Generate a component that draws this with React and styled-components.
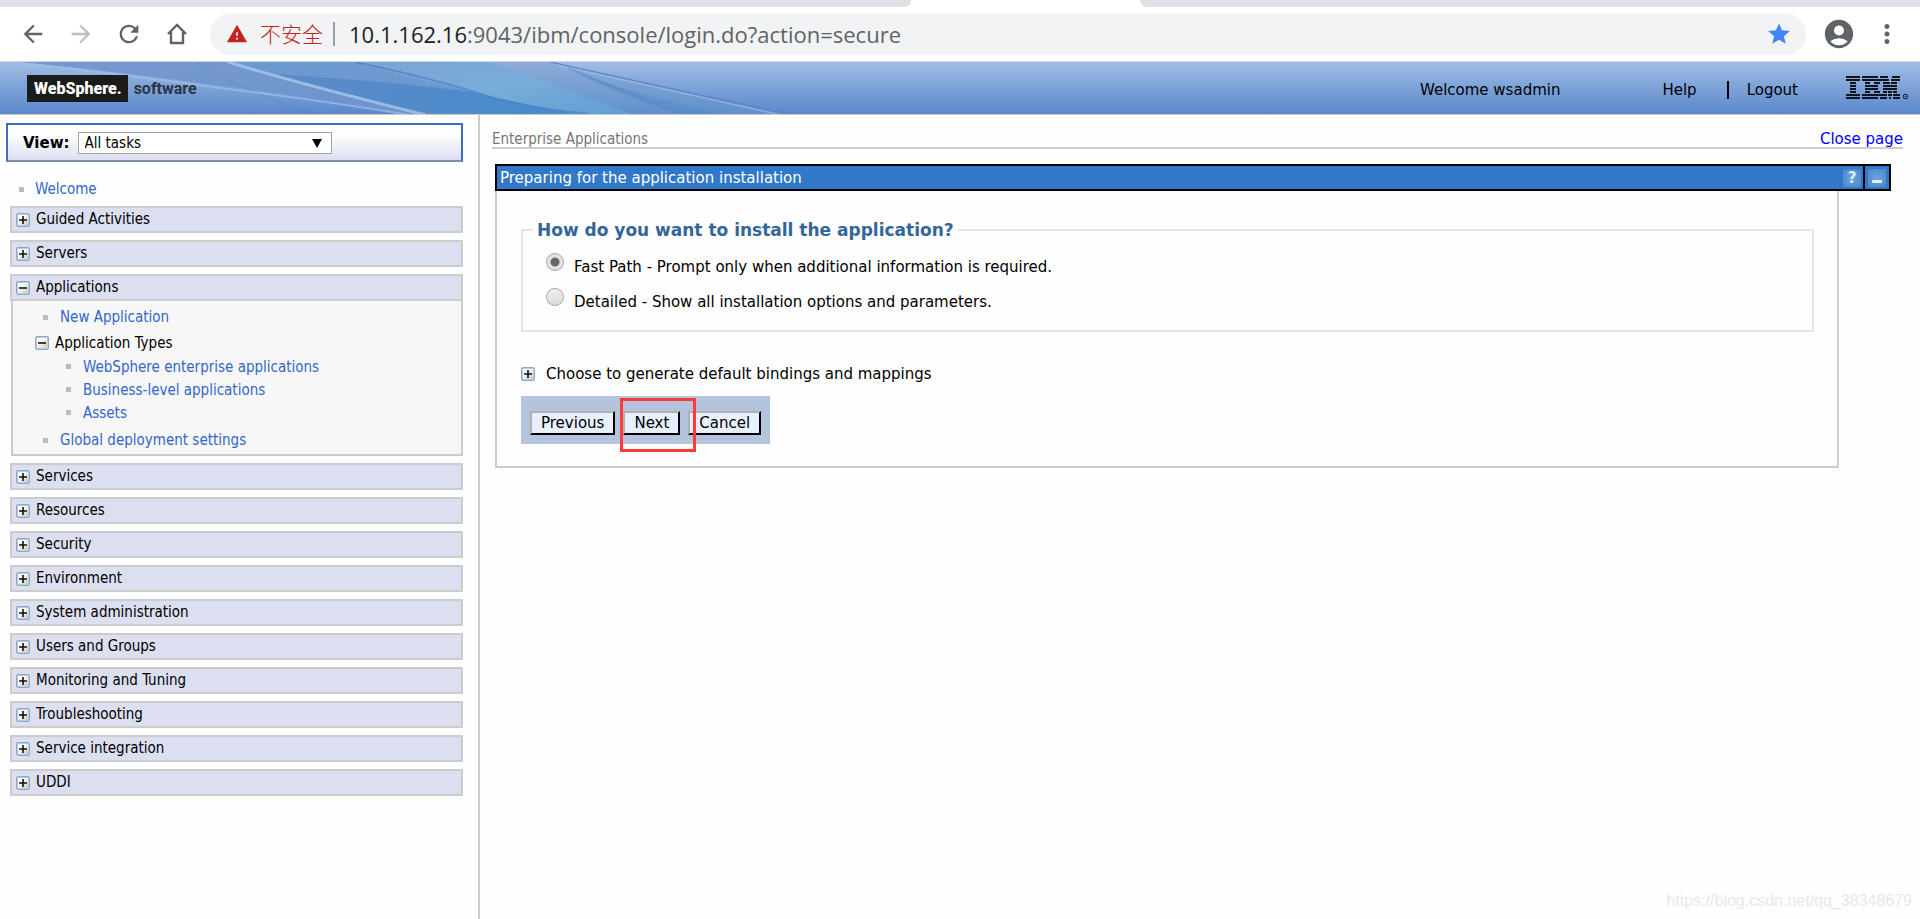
import React, { useState } from "react";
import styled, { createGlobalStyle } from "styled-components";
import {
  MdAccountCircle,
  MdArrowBack,
  MdArrowForward,
  MdMoreVert,
  MdRefresh,
  MdStar,
  MdWarning,
} from "react-icons/md";

const applicationLinks = [
  "WebSphere enterprise applications",
  "Business-level applications",
  "Assets",
];

const sectionsBefore = ["Guided Activities", "Servers"];

const sectionsAfter = [
  "Services",
  "Resources",
  "Security",
  "Environment",
  "System administration",
  "Users and Groups",
  "Monitoring and Tuning",
  "Troubleshooting",
  "Service integration",
  "UDDI",
];

function ToggleIcon({ open }) {
  return (
    <ToggleSvg viewBox="0 0 14 14" aria-hidden="true">
      <defs>
        <linearGradient id="toggleFill" x1="0" y1="0" x2="1" y2="1">
          <stop offset="0.3" stopColor="#ffffff" />
          <stop offset="1" stopColor="#cdc8b8" />
        </linearGradient>
      </defs>
      <rect x="0.5" y="0.5" width="13" height="13" rx="1.5" fill="#b9cde0" stroke="#8fa9c4" />
      <rect x="2" y="2" width="10" height="10" fill="url(#toggleFill)" />
      <path d={open ? "M3 7h8" : "M3 7h8M7 3v8"} stroke="#111" strokeWidth="1.6" />
    </ToggleSvg>
  );
}

function HomeIcon() {
  return (
    <svg width="28" height="28" viewBox="0 0 28 28" aria-hidden="true">
      <path
        d="M5 14L14 5l9 9M8 12v11h12V12"
        fill="none"
        stroke="#5f6368"
        strokeWidth="2.4"
      />
    </svg>
  );
}

function BannerArt() {
  return (
    <ArtSvg width="800" height="52" viewBox="0 0 800 52" aria-hidden="true">
      <defs>
        <linearGradient id="rightFade" x1="0" x2="0" y1="0" y2="1">
          <stop offset="0" stopColor="#8fadd9" />
          <stop offset="1" stopColor="#5f90cc" />
        </linearGradient>
        <linearGradient id="lightFade" x1="0" x2="1" y1="0" y2="1">
          <stop offset="0" stopColor="#7ba3d3" />
          <stop offset="0.5" stopColor="#79add9" />
          <stop offset="1" stopColor="#5f9fd6" />
        </linearGradient>
        <linearGradient id="darkFade" x1="0" x2="1" y1="0" y2="0">
          <stop offset="0" stopColor="#5d8bc9" />
          <stop offset="1" stopColor="#458bcb" />
        </linearGradient>
      </defs>
      <path d="M20 0H229L426 52H400Q300 32 230 25Q120 10 20 0z" fill="#7095cd" opacity="0.9" />
      <path d="M229 0H360L560 52H426z" fill="#6c99cf" />
      <path d="M275 12Q400 20 480 31Q540 42 575 52H420z" fill="url(#darkFade)" />
      <path d="M350 0H500L632 52H575Q540 46 500 37z" fill="url(#lightFade)" />
      <path d="M490 0H550L787 52H632z" fill="url(#rightFade)" />
      <path d="M575 10Q620 34 680 52H720Q640 34 575 10z" fill="#4f86c4" opacity="0.4" />
      <g fill="none">
        <path d="M355 0Q440 18 490 35Q540 48 590 52" stroke="#4b7fc4" strokeWidth="2" opacity="0.7" />
        <path d="M550 0L787 52" stroke="#5a82c8" strokeWidth="1.5" opacity="0.8" />
        <path d="M556 3L781 53" stroke="#9dbce6" strokeWidth="1.5" opacity="0.7" />
        <path d="M568 6L680 52" stroke="#5485c4" strokeWidth="1.5" opacity="0.5" />
        <path d="M196 0Q225 22 315 52" stroke="#5b83c6" opacity="0.5" />
        <path d="M10 0Q120 12 220 26Q320 38 410 53" stroke="#9cc0e8" strokeWidth="2" opacity="0.7" />
        <path d="M228 0Q300 22 426 53" stroke="#a4c8ec" strokeWidth="3" opacity="0.8" />
      </g>
    </ArtSvg>
  );
}

function IbmLogo() {
  const bars = [
    [[0, 14], [16, 16], [34, 8], [46, 8]],
    [[0, 14], [16, 18], [34, 9], [45, 9]],
    [[4, 6], [19, 5], [28, 6], [37, 7], [45, 6]],
    [[4, 6], [19, 13], [37, 14]],
    [[4, 6], [19, 13], [37, 14]],
    [[4, 6], [19, 5], [28, 6], [37, 4], [42, 4], [47, 4]],
    [[0, 14], [16, 18], [34, 7], [42, 4], [47, 7]],
    [[0, 14], [16, 16], [34, 7], [43, 2], [47, 7]],
  ];
  return (
    <svg width="63" height="24" viewBox="0 0 63 24" role="img" aria-label="IBM">
      {bars.map((row, i) =>
        row.map(([x, width]) => (
          <rect key={`${i}-${x}`} x={x} y={i * 3} width={width} height="2" fill="#10141c" />
        ))
      )}
      <circle cx="59.5" cy="20.5" r="2.3" fill="none" stroke="#10141c" />
      <circle cx="59.5" cy="20.5" r="0.8" fill="#10141c" />
    </svg>
  );
}

function BrowserChrome() {
  return (
    <Chrome>
      <TabStrip>
        <TabEdge $grow={911} $side="right" />
        <ActiveTab />
        <TabEdge $grow={780} $side="left" />
      </TabStrip>
      <Toolbar>
        <HistoryButtons>
          <ToolButton aria-label="Back">
            <MdArrowBack size={28} />
          </ToolButton>
          <ToolButton aria-label="Forward" disabled>
            <MdArrowForward size={28} />
          </ToolButton>
          <ToolButton aria-label="Reload">
            <MdRefresh size={28} />
          </ToolButton>
          <ToolButton aria-label="Home">
            <HomeIcon />
          </ToolButton>
        </HistoryButtons>
        <AddressBar>
          <MdWarning size={22} color="#c5221f" />
          <Insecure>不安全</Insecure>
          <Url>
            <b>10.1.162.16</b>:9043/ibm/console/login.do?action=secure
          </Url>
          <ToolButton aria-label="Bookmark">
            <MdStar size={26} color="#4285f4" />
          </ToolButton>
        </AddressBar>
        <Tools>
          <ToolButton aria-label="Profile">
            <MdAccountCircle size={34} />
          </ToolButton>
          <ToolButton aria-label="Menu">
            <MdMoreVert size={30} />
          </ToolButton>
        </Tools>
      </Toolbar>
    </Chrome>
  );
}

function Section({ title, open }) {
  return (
    <SectionButton type="button" aria-expanded={!!open}>
      <ToggleIcon open={open} />
      <span>{title}</span>
    </SectionButton>
  );
}

function Navigation() {
  return (
    <Sidebar>
      <ViewBox>
        <label htmlFor="view">View:</label>
        <SelectWrap>
          <select id="view" defaultValue="all">
            <option value="all">All tasks</option>
          </select>
          <svg width="10" height="9" viewBox="0 0 10 9" aria-hidden="true">
            <path d="M0 0h10L5 9z" />
          </svg>
        </SelectWrap>
      </ViewBox>
      <WelcomeList>
        <NavItem $level={0}>
          <a href="#welcome">Welcome</a>
        </NavItem>
      </WelcomeList>
      <Sections>
        {sectionsBefore.map((title) => (
          <Section key={title} title={title} />
        ))}
        <div>
          <Section title="Applications" open />
          <SubNav>
            <NavItem $level={1}>
              <a href="#new">New Application</a>
            </NavItem>
            <li>
              <SubToggle type="button" aria-expanded="true">
                <ToggleIcon open />
                Application Types
              </SubToggle>
              <TypeList>
                {applicationLinks.map((title) => (
                  <NavItem key={title} $level={2}>
                    <a href="#types">{title}</a>
                  </NavItem>
                ))}
              </TypeList>
            </li>
            <NavItem $level={1}>
              <a href="#deployment">Global deployment settings</a>
            </NavItem>
          </SubNav>
        </div>
        {sectionsAfter.map((title) => (
          <Section key={title} title={title} />
        ))}
      </Sections>
    </Sidebar>
  );
}

function InstallPage() {
  const [path, setPath] = useState("fast");
  return (
    <Main>
      <Breadcrumb>
        <span>Enterprise Applications</span>
        <a href="#close">Close page</a>
      </Breadcrumb>
      <TitleBar>
        <h1>Preparing for the application installation</h1>
        <TitleButton type="button" aria-label="Help for this page">
          <span>?</span>
        </TitleButton>
        <TitleButton type="button" aria-label="Minimize" $divided>
          <Dash />
        </TitleButton>
      </TitleBar>
      <Portlet>
        <Options>
          <legend>How do you want to install the application?</legend>
          <Option>
            <input
              type="radio"
              name="path"
              checked={path === "fast"}
              onChange={() => setPath("fast")}
            />
            <span>Fast Path - Prompt only when additional information is required.</span>
          </Option>
          <Option>
            <input
              type="radio"
              name="path"
              checked={path === "detailed"}
              onChange={() => setPath("detailed")}
            />
            <span>Detailed - Show all installation options and parameters.</span>
          </Option>
        </Options>
        <Bindings type="button" aria-expanded="false">
          <ToggleIcon />
          Choose to generate default bindings and mappings
        </Bindings>
        <ButtonBar>
          <ActionButton type="button">Previous</ActionButton>
          <Highlight>
            <ActionButton type="button">Next</ActionButton>
          </Highlight>
          <ActionButton type="button">Cancel</ActionButton>
        </ButtonBar>
      </Portlet>
    </Main>
  );
}

function App() {
  return (
    <Page>
      <GlobalStyle />
      <BrowserChrome />
      <Banner>
        <BannerArt />
        <Brand>
          <b>WebSphere.</b>
          <span>software</span>
        </Brand>
        <UserNav>
          <span className="user">Welcome wsadmin</span>
          <a href="#help">Help</a>
          <a href="#logout" className="logout">
            Logout
          </a>
          <IbmLogo />
        </UserNav>
      </Banner>
      <Body>
        <Navigation />
        <InstallPage />
      </Body>
      <Watermark>https://blog.csdn.net/qq_38348679</Watermark>
    </Page>
  );
}

const GlobalStyle = createGlobalStyle`
  * {
    box-sizing: border-box;
  }
  body {
    margin: 0;
    background: #fefefe;
    color: #000;
    font: 15px/20px "DejaVu Sans", Verdana, sans-serif;
  }
  button, select {
    font: inherit;
    color: inherit;
  }
  ul {
    list-style: none;
    margin: 0;
    padding: 0;
  }
  a {
    text-decoration: none;
  }
  svg {
    flex-shrink: 0;
  }
`;

const Page = styled.div`
  display: flex;
  flex-direction: column;
  min-height: 100vh;
  position: relative;
`;

const Chrome = styled.div`
  background: #fff;
  border-bottom: 1px solid #d3d7db;
`;

const TabStrip = styled.div`
  display: flex;
  height: 7px;
`;

const TabEdge = styled.div`
  flex: ${(props) => props.$grow} 1 0;
  background: #dee1e6;
  border-bottom-${(props) => props.$side}-radius: 8px;
`;

const ActiveTab = styled.div`
  flex: 0 0 229px;
`;

const Toolbar = styled.div`
  display: flex;
  align-items: center;
  gap: 16px;
  padding: 6px 18px 6px 19px;
`;

const HistoryButtons = styled.div`
  display: flex;
  gap: 20px;
  padding-right: 3px;
`;

const ToolButton = styled.button`
  display: flex;
  padding: 0;
  border: 0;
  background: none;
  color: #5f6368;
  &:disabled {
    color: #bdbfc2;
  }
`;

const AddressBar = styled.div`
  display: flex;
  flex: 1;
  align-items: center;
  height: 42px;
  padding: 0 14px 0 16px;
  border-radius: 21px;
  background: #f1f3f4;
  font-family: "Open Sans", "Noto Sans CJK SC", sans-serif;
`;

const Insecure = styled.span`
  margin-left: 12px;
  padding-right: 10px;
  border-right: 2px solid #9a9da1;
  color: #c5221f;
  font-size: 21px;
  font-weight: 300;
  line-height: 24px;
`;

const Url = styled.div`
  flex: 1;
  margin-left: 14px;
  color: #5f6368;
  font-size: 22px;
  line-height: 28px;
  b {
    color: #202124;
    font-weight: 400;
  }
`;

const Tools = styled.div`
  display: flex;
  align-items: center;
  gap: 16px;
`;

const Banner = styled.header`
  position: relative;
  display: flex;
  align-items: center;
  justify-content: space-between;
  height: 53px;
  padding: 0 11px 0 27px;
  border-bottom: 1px solid #ccc;
  background: linear-gradient(#a0bde4, #5a87cb);
`;

const ArtSvg = styled.svg`
  position: absolute;
  top: 0;
  left: 0;
`;

const Brand = styled.div`
  position: relative;
  display: flex;
  align-items: center;
  gap: 6px;
  color: #2c3442;
  font: 700 16px/27px Roboto, "Liberation Sans", sans-serif;
  b {
    padding: 0 6px 0 7px;
    background: #1b1b1b;
    color: #fff;
  }
`;

const UserNav = styled.nav`
  display: flex;
  align-items: center;
  a,
  .user {
    margin-top: 3px;
    color: #000;
    line-height: 18px;
  }
  .user {
    margin-right: 102px;
  }
  .logout {
    margin-right: 48px;
    margin-left: 30px;
    padding-left: 18px;
    border-left: 2px solid #000;
  }
`;

const Body = styled.div`
  display: flex;
  flex: 1;
`;

const Sidebar = styled.nav`
  flex: 0 0 480px;
  padding: 8px 15px 8px 6px;
  border-right: 2px solid #ccc;
  font-family: "DejaVu Sans Condensed", Tahoma, sans-serif;
`;

const ViewBox = styled.div`
  display: flex;
  align-items: center;
  gap: 8px;
  padding: 7px 15px 6px;
  border: 2px solid #3b6fb6;
  border-bottom-color: #7d8ca8;
  background: linear-gradient(#fff 25%, #dcdff0);
  label {
    font: 700 15px/20px "DejaVu Sans", Verdana, sans-serif;
  }
`;

const SelectWrap = styled.div`
  position: relative;
  flex: 0 1 254px;
  select {
    display: block;
    width: 100%;
    height: 22px;
    padding: 0 6px;
    border: 1px solid #a5a5a5;
    border-radius: 0;
    background: #fff;
    appearance: none;
  }
  svg {
    position: absolute;
    top: 7px;
    right: 10px;
    pointer-events: none;
  }
`;

const WelcomeList = styled.ul`
  padding-top: 10px;
`;

const TypeList = styled.ul`
  padding-bottom: 2px;
`;

const NavItem = styled.li`
  display: flex;
  align-items: center;
  gap: ${(props) => (props.$level ? 12 : 11)}px;
  height: ${(props) => [34, 28, 23][props.$level]}px;
  padding-left: ${(props) => [13, 30, 53][props.$level]}px;
  &::before {
    content: "";
    width: 5px;
    height: 5px;
    background: #bbb;
  }
  a {
    color: #36c;
  }
`;

const Sections = styled.div`
  display: flex;
  flex-direction: column;
  gap: 7px;
  padding-left: 4px;
`;

const SectionButton = styled.button`
  display: flex;
  align-items: center;
  gap: 6px;
  width: 100%;
  height: 27px;
  padding: 0 4px;
  border: 2px solid #ccc;
  background: #dcdff0;
  text-align: left;
  span {
    padding-bottom: 2px;
  }
`;

const SubNav = styled.ul`
  margin-left: 1px;
  padding-top: 2px;
  border: 2px solid #ccc;
  border-top: 0;
  background: #f7f7f7;
`;

const SubToggle = styled.button`
  display: flex;
  align-items: center;
  gap: 6px;
  height: 24px;
  padding: 0 0 0 22px;
  border: 0;
  background: none;
`;

const ToggleSvg = styled.svg`
  width: 14px;
  height: 14px;
`;

const Main = styled.main`
  flex: 1;
  padding: 16px 17px 0 12px;
`;

const Breadcrumb = styled.div`
  display: flex;
  justify-content: space-between;
  border-bottom: 2px solid #ccc;
  color: #767676;
  font-family: "DejaVu Sans Condensed", Tahoma, sans-serif;
  line-height: 16px;
  a {
    color: #00f;
    font-family: "DejaVu Sans", Verdana, sans-serif;
  }
`;

const TitleBar = styled.div`
  display: flex;
  height: 27px;
  margin: 15px 12px 0 3px;
  border: 2px solid #000;
  background: #3178c8;
  color: #fff;
  h1 {
    flex: 1;
    margin: 0;
    padding-left: 3px;
    font-size: 15px;
    font-weight: 400;
    line-height: 24px;
  }
`;

const TitleButton = styled.button`
  display: flex;
  width: ${(props) => (props.$divided ? 26 : 20)}px;
  padding: 3px ${(props) => (props.$divided ? 3 : 2)}px 2px 0;
  border: 0;
  border-left: ${(props) => (props.$divided ? "2px solid #000" : 0)};
  padding-left: ${(props) => (props.$divided ? 3 : 0)}px;
  background: none;
  span {
    flex: 1;
    height: 18px;
    background: radial-gradient(#6aa5df, #4a86c6);
    color: #dcecff;
    font: 700 15px/18px "DejaVu Sans", Verdana, sans-serif;
    text-align: center;
  }
`;

const Dash = styled.span`
  &::after {
    content: "";
    display: block;
    width: 10px;
    height: 3px;
    margin: 11px auto 0;
    background: #dcecff;
  }
`;

const Portlet = styled.section`
  margin: 0 64px 0 3px;
  padding: 29px 23px 22px 24px;
  border: 2px solid #ccc;
  border-top: 0;
`;

const Options = styled.fieldset`
  margin: 0;
  padding: 13px 10px 7px;
  border: 2px solid #e5e5e5;
  legend {
    padding: 0 4px;
    color: #369;
    font-size: 17px;
    font-weight: 700;
    line-height: 20px;
  }
`;

const Option = styled.label`
  display: flex;
  gap: 10px;
  height: 35px;
  padding-left: 13px;
  input {
    appearance: none;
    width: 18px;
    height: 18px;
    margin: 0;
    border: 1px solid #a6a6a6;
    border-radius: 50%;
    background: linear-gradient(#eee, #dcdcdc);
  }
  input:checked {
    background: radial-gradient(circle, #666 4px, #e4e4e4 5px);
  }
  span {
    padding-top: 4px;
  }
`;

const Bindings = styled.button`
  display: flex;
  align-items: center;
  gap: 11px;
  margin: 32px 0 12px;
  padding: 0;
  border: 0;
  background: none;
`;

const ButtonBar = styled.div`
  display: flex;
  gap: 8px;
  width: fit-content;
  padding: 15px 9px 9px;
  background: #b5c4dd;
`;

const ActionButton = styled.button`
  display: block;
  height: 24px;
  padding: 0 9px;
  border: 2px solid #000;
  border-top-color: #b0b0b0;
  border-left-color: #b0b0b0;
  background: #e8f0ff;
`;

const Highlight = styled.div`
  position: relative;
  &::after {
    content: "";
    position: absolute;
    inset: -13px -16px -17px -3px;
    border: 3px solid #ff3b38;
    pointer-events: none;
  }
`;

const Watermark = styled.div`
  position: absolute;
  right: 8px;
  bottom: 8px;
  color: #e8e8e8;
  font: 16px/20px "Liberation Sans", Arial, sans-serif;
`;

export default App;
